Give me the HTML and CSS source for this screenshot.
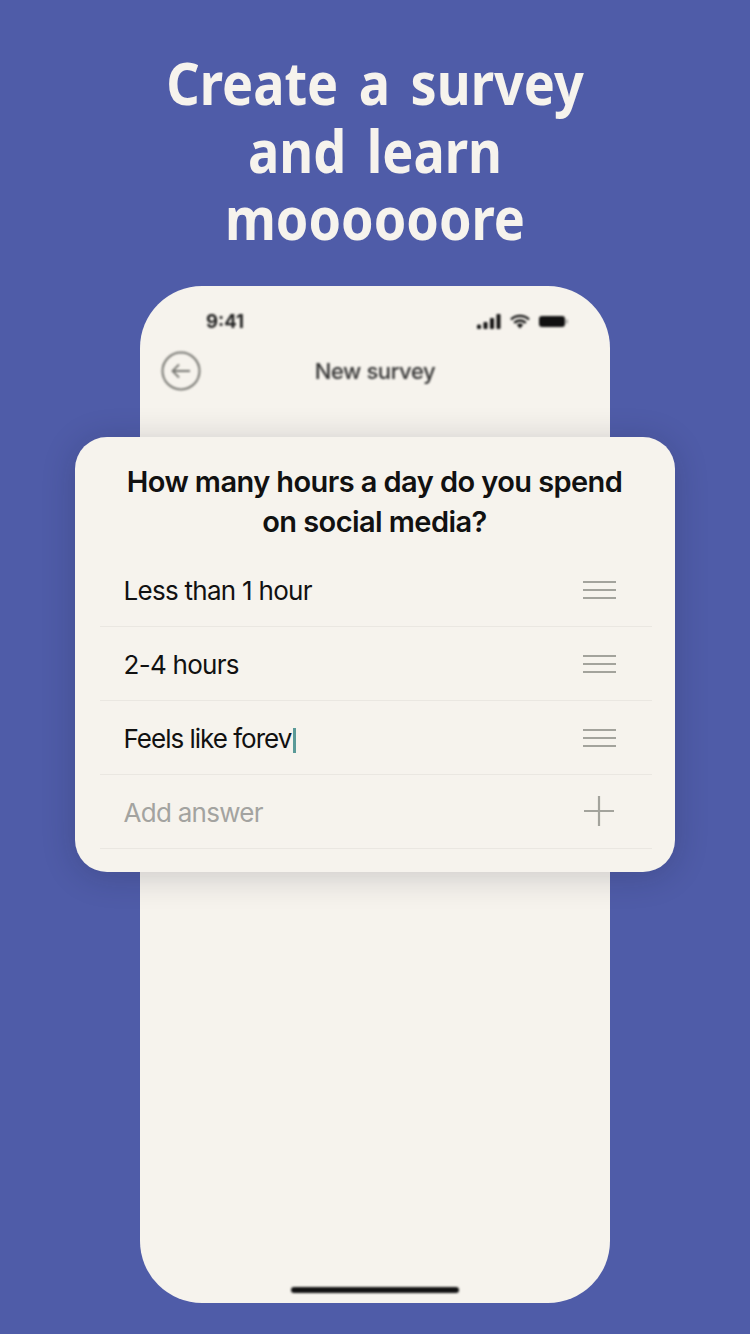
FILE: index.html
```html
<!DOCTYPE html>
<html lang="en">
<head>
<meta charset="utf-8">
<title>Create a survey</title>
<link rel="stylesheet" href="styles.css">
</head>
<body>
<main class="screen">
  <h1 class="headline">Create a survey<br>and learn<br>moooooore</h1>
  <section class="phone">
    <div class="phone-blur">
      <div class="status">
        <span class="time">9:41</span>
        <span class="status-icons">
          <svg width="24" height="15" viewBox="0 0 24 15"><rect x="0" y="10.500" width="4" height="4.500" rx="1.500"/><rect x="6.500" y="8" width="4" height="7" rx="1"/><rect x="13" y="4" width="4" height="11" rx="1"/><rect x="19.500" y="0" width="4" height="15" rx="1"/></svg>
          <svg width="20" height="15" viewBox="0 0 20 15"><path d="M10 14.500 L6.800 10.800 A5 5 0 0 1 13.200 10.800 Z"/><path d="M1 5.500 A13 13 0 0 1 19 5.500" fill="none" stroke="#111" stroke-width="2.400"/><path d="M4.200 8.800 A8.500 8.500 0 0 1 15.800 8.800" fill="none" stroke="#111" stroke-width="2.400"/></svg>
          <svg width="29" height="13" viewBox="0 0 29 13"><rect x="0" y="1" width="26" height="11" rx="3"/><rect x="27" y="4.500" width="1.500" height="4" fill="#888"/></svg>
        </span>
      </div>
      <div class="nav">
        <svg class="back" width="40" height="40" viewBox="0 0 40 40" fill="none" stroke="#777772" stroke-width="2"><circle cx="20" cy="20" r="18.500"/><path d="M29 20H11.500M18 13.500 11.500 20 18 26.500" stroke-width="1.800"/></svg>
        <span class="nav-title">New survey</span>
      </div>
      <div class="home-bar"></div>
    </div>
  </section>
  <section class="card">
    <h2 class="question">How many hours a day do you spend<br>on social media?</h2>
    <ul class="answers">
      <li class="answer"><span>Less than 1 hour</span><span class="handle"><i></i><i></i><i></i></span></li>
      <li class="answer"><span>2-4 hours</span><span class="handle"><i></i><i></i><i></i></span></li>
      <li class="answer typing"><span>Feels like forev<b class="caret"></b></span><span class="handle"><i></i><i></i><i></i></span></li>
      <li class="answer add"><span>Add answer</span>
        <svg class="plus" width="32" height="32" viewBox="0 0 32 32" stroke="#a3a39c" stroke-width="2.200" fill="none"><path d="M16 1V31M1 16H31"/></svg>
      </li>
    </ul>
  </section>
</main>
</body>
</html>
```

FILE: styles.css
```css
* { box-sizing: border-box; }
html, body { margin: 0; padding: 0; }
body { width: 750px; height: 1334px; overflow: hidden; background: #4f5ca8; }

.screen {
  position: relative;
  width: 750px;
  height: 1334px;
  padding-top: 49px;
  display: flex;
  flex-direction: column;
  align-items: center;
}

.headline {
  margin: 0;
  color: #f6f3ed;
  font-family: "Noto Sans", sans-serif;
  font-weight: 700;
  font-size: 60px;
  line-height: 67.500px;
  text-align: center;
  word-spacing: 8px;
  white-space: nowrap;
  transform: scaleX(0.87);
}

.phone {
  margin-top: 34px;
  width: 470px;
  height: 1017px;
  background: #f6f3ed;
  border-radius: 62px;
  overflow: hidden;
}

.phone-blur {
  height: 100%;
  display: flex;
  flex-direction: column;
  filter: blur(1px);
}

.status {
  display: flex;
  justify-content: space-between;
  align-items: center;
  padding: 25px 42px 0 66px;
  height: 46px;
}

.time {
  font-family: "Inter", sans-serif;
  font-weight: 700;
  font-size: 18.500px;
  color: #222;
}

.status-icons { display: flex; align-items: center; gap: 9px; fill: #111; }

.nav {
  display: flex;
  align-items: center;
  justify-content: center;
  position: relative;
  margin-top: 19px;
  height: 40px;
}

.back { position: absolute; left: 21px; top: 0; }

.nav-title {
  font-family: "Inter", sans-serif;
  font-weight: 500;
  font-size: 22px;
  color: #333;
  letter-spacing: -0.4px;
}

.home-bar {
  margin: auto auto 10px;
  width: 168px;
  height: 6px;
  border-radius: 3px;
  background: #111;
}

.card {
  position: absolute;
  left: 75px;
  top: 437px;
  width: 600px;
  height: 435px;
  padding: 25px 23px 0 25px;
  background: #f6f3ed;
  border-radius: 32px;
  box-shadow: 0 4px 34px rgba(20, 20, 40, 0.2);
}

.question {
  margin: 0;
  height: 91px;
  padding-right: 3px;
  font-family: "Inter", sans-serif;
  font-weight: 600;
  font-size: 29px;
  line-height: 40px;
  letter-spacing: -0.58px;
  color: #111;
  text-align: center;
}

.answers { list-style: none; margin: 0; padding: 0; }

.answer {
  display: flex;
  align-items: center;
  justify-content: space-between;
  height: 74px;
  padding: 1px 36px 0 23.500px;
  border-bottom: 1px solid #eae7e1;
  font-family: "Inter", sans-serif;
  font-size: 26px;
  letter-spacing: -0.72px;
  color: #111;
}

.typing { letter-spacing: -1px; }

.add { color: #a3a3a0; }

.handle {
  display: flex;
  flex-direction: column;
  gap: 5.600px;
  width: 33px;
  margin-top: 0;
}
.handle i { display: block; height: 2.400px; background: #a3a39c; }

.plus { margin-right: 1px; margin-top: -2px; }

.caret {
  display: inline-block;
  width: 2.500px;
  height: 25px;
  margin-left: 2px;
  vertical-align: -5px;
  background: #5a9a98;
}
```
